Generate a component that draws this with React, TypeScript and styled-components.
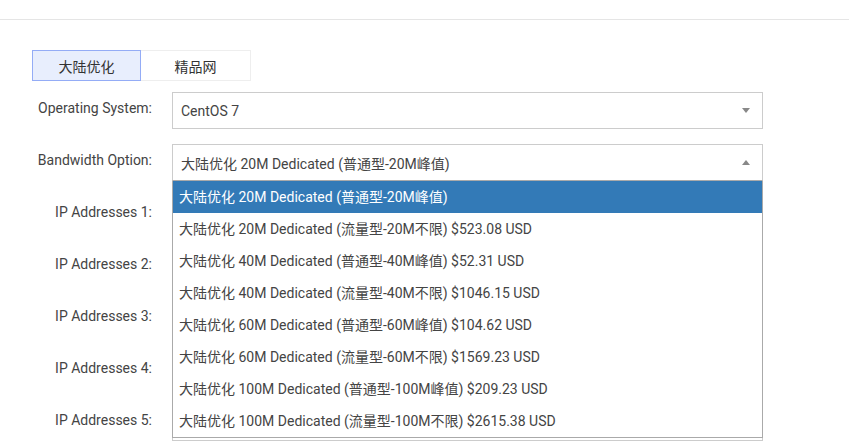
import styled, { createGlobalStyle } from 'styled-components';

const GlobalStyle = createGlobalStyle`
  html, body {
    margin: 0;
    padding: 0;
    background: #fff;
  }
  body {
    font-family: Roboto, "Noto Sans CJK SC", sans-serif;
    font-size: 14px;
    color: #444;
  }
  * { box-sizing: border-box; }
`;

const TopBar = styled.div`
  height: 20px;
  border-bottom: 1px solid #e5e5e5;
`;

const Content = styled.div`
  padding: 30px 0 0 32px;
`;

const Tabs = styled.div`
  display: flex;
  height: 31px;
  margin-bottom: 11px;
`;

const Tab = styled.div<{ $active?: boolean }>`
  width: ${(p) => (p.$active ? '109px' : '110px')};
  display: flex;
  align-items: center;
  justify-content: center;
  font-size: 14px;
  color: #333;
  background: ${(p) => (p.$active ? '#e8eefd' : '#fff')};
  border: 1px solid ${(p) => (p.$active ? '#94acf6' : '#eeeeee')};
  border-left-width: ${(p) => (p.$active ? '1px' : '0')};
`;

const Form = styled.div`
  display: flex;
  flex-direction: column;
  gap: 15px;
`;

const Row = styled.div`
  display: flex;
  gap: 20px;
`;

const Label = styled.div`
  width: 120px;
  text-align: right;
  padding-top: 6px;
  line-height: 20px;
  color: #444;
  white-space: nowrap;
`;

const Control = styled.div`
  position: relative;
  width: 591px;
`;

const SelectBox = styled.div<{ $open?: boolean }>`
  height: 37px;
  border: 1px solid #cccccc;
  border-bottom-color: ${(p) => (p.$open ? '#aaaaaa' : '#cccccc')};
  display: flex;
  align-items: center;
  padding: 0 8px 0 8px;
  color: #444;
  background: #fff;
`;

const SelectText = styled.span`
  flex: 1;
  white-space: nowrap;
`;

const Arrow = styled.span<{ $up?: boolean }>`
  width: 0;
  height: 0;
  border-left: 4px solid transparent;
  border-right: 4px solid transparent;
  ${(p) =>
    p.$up ? 'border-bottom: 5px solid #888;' : 'border-top: 5px solid #888;'}
  margin-right: 4px;
`;

const TextInput = styled.div`
  height: 37px;
  border: 1px solid #cccccc;
  background: #fff;
`;

const Dropdown = styled.ul`
  position: absolute;
  left: 0;
  top: 37px;
  width: 591px;
  margin: 0;
  padding: 0;
  list-style: none;
  background: #fff;
  border: 1px solid #aaaaaa;
  border-top: 0;
  z-index: 10;
`;

const Option = styled.li<{ $selected?: boolean }>`
  height: 32px;
  line-height: 32px;
  padding-left: 6px;
  white-space: nowrap;
  color: ${(p) => (p.$selected ? '#fff' : '#444')};
  background: ${(p) => (p.$selected ? '#337ab7' : '#fff')};
`;

const options = [
  '大陆优化 20M Dedicated (普通型-20M峰值)',
  '大陆优化 20M Dedicated (流量型-20M不限) $523.08 USD',
  '大陆优化 40M Dedicated (普通型-40M峰值) $52.31 USD',
  '大陆优化 40M Dedicated (流量型-40M不限) $1046.15 USD',
  '大陆优化 60M Dedicated (普通型-60M峰值) $104.62 USD',
  '大陆优化 60M Dedicated (流量型-60M不限) $1569.23 USD',
  '大陆优化 100M Dedicated (普通型-100M峰值) $209.23 USD',
  '大陆优化 100M Dedicated (流量型-100M不限) $2615.38 USD',
];

const App = () => {
  return (
    <>
      <GlobalStyle />
      <TopBar />
      <Content>
        <Tabs>
          <Tab $active>大陆优化</Tab>
          <Tab>精品网</Tab>
        </Tabs>
        <Form>
          <Row>
            <Label>Operating System:</Label>
            <Control>
              <SelectBox>
                <SelectText>CentOS 7</SelectText>
                <Arrow />
              </SelectBox>
            </Control>
          </Row>
          <Row>
            <Label>Bandwidth Option:</Label>
            <Control>
              <SelectBox $open>
                <SelectText>{options[0]}</SelectText>
                <Arrow $up />
              </SelectBox>
              <Dropdown>
                {options.map((o, i) => (
                  <Option key={o} $selected={i === 0}>
                    {o}
                  </Option>
                ))}
              </Dropdown>
            </Control>
          </Row>
          {[1, 2, 3, 4, 5].map((n) => (
            <Row key={n}>
              <Label>IP Addresses {n}:</Label>
              <Control>
                <TextInput />
              </Control>
            </Row>
          ))}
        </Form>
      </Content>
    </>
  );
};

export default App;
